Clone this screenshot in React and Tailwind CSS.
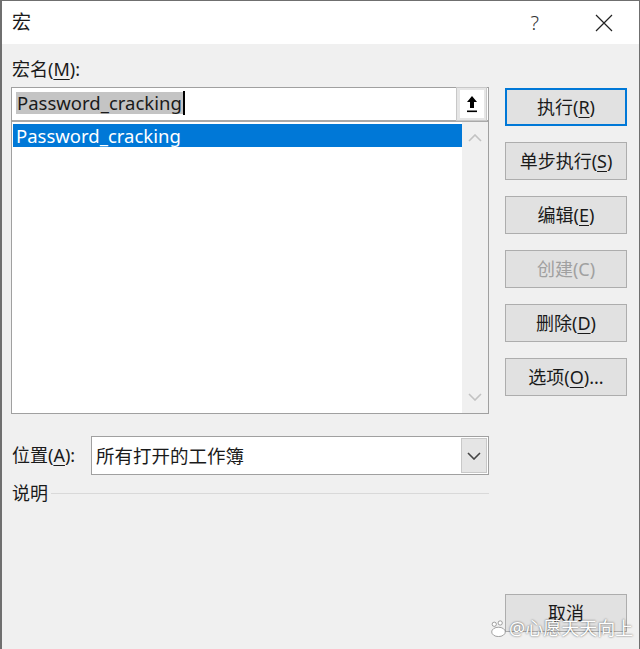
import React from 'react';

const FONT = { fontFamily: '"Noto Sans", "Noto Sans CJK SC", sans-serif' };

function U({ children }) {
  return <span className="underline underline-offset-[3px] decoration-1">{children}</span>;
}

function DlgButton({ children, primary, disabled }) {
  return (
    <button
      className={`h-[38px] w-[122px] flex items-center justify-center text-[18px] bg-[#e1e1e1] ${
        primary ? 'border-2 border-[#0078d7]' : 'border border-[#adadad]'
      } ${disabled ? 'text-[#a0a0a0]' : 'text-[#1a1a1a]'}`}
    >
      {children}
    </button>
  );
}

function Chevron({ up, color = '#c2c2c2' }) {
  return (
    <svg width="14" height="8" viewBox="0 0 14 8">
      <path
        d={up ? 'M1 7 L7 1 L13 7' : 'M1 1 L7 7 L13 1'}
        fill="none"
        stroke={color}
        strokeWidth="1.6"
      />
    </svg>
  );
}

export default function App() {
  return (
    <div style={FONT} className="relative w-[640px] h-[649px] overflow-hidden bg-[#f0f0f0] border-l-2 border-t border-r border-[#6f6f6f] text-[#1a1a1a]">
      {/* Title bar */}
      <div className="h-[43px] bg-white flex items-center">
        <span className="ml-[10px] text-[19px]">宏</span>
        <span className="ml-auto mr-[56px] text-[20px] text-[#333] font-light">?</span>
        <svg width="18" height="18" viewBox="0 0 18 18" className="mr-[26px]">
          <path d="M1 1 L17 17 M17 1 L1 17" stroke="#222" strokeWidth="1.2" />
        </svg>
      </div>

      <div className="flex pl-[9px]">
        {/* Left column */}
        <div className="w-[478px] flex flex-col">
          <div className="mt-[12px] h-[26px] text-[18px] leading-[26px] pl-[1px]">
            宏名(<U>M</U>):
          </div>
          <div className="mt-[5px] border border-[#a0a0a0] bg-white flex flex-col h-[327px]">
            {/* Name input */}
            <div className="h-[34px] flex items-center pl-[4px] pr-[1px] border-b-2 border-[#a9a9a9]">
              <span className="bg-[#c4c4c4] text-[18.5px] leading-[22px] px-[1px] -mt-[3px]">Password_cracking</span>
              <span className="w-[2px] h-[24px] bg-black -mt-[3px]" />
              <div className="ml-auto h-[34px] w-[31px] bg-[#e6e6e6] border border-[#c8c8c8] flex items-center justify-center">
                <div className="bg-white w-[24px] h-[28px] flex items-center justify-center">
                  <svg width="12" height="18" viewBox="0 0 12 18">
                    <path d="M6 1 L11 7 L8 7 L8 13 L4 13 L4 7 L1 7 Z" fill="#000" />
                    <rect x="1" y="15.5" width="10" height="1.6" fill="#000" />
                  </svg>
                </div>
              </div>
            </div>
            {/* List */}
            <div className="flex flex-1">
              <div className="flex-1 pt-[2px] pl-[1px]">
                <div className="h-[23px] bg-[#0078d7] text-white text-[18.5px] leading-[23px] pl-[3px]">
                  Password_cracking
                </div>
              </div>
              <div className="w-[26px] bg-[#f0f0f0] flex flex-col items-center justify-between py-[12px]">
                <Chevron up />
                <Chevron />
              </div>
            </div>
          </div>

          {/* Location */}
          <div className="mt-[22px] flex items-center">
            <span className="w-[80px] pl-[1px] text-[18px]">
              位置(<U>A</U>):
            </span>
            <div className="flex-1 h-[39px] border border-[#a0a0a0] bg-white flex items-center">
              <span className="pl-[4px] text-[18.5px]">所有打开的工作簿</span>
              <div className="ml-auto mr-[1px] w-[26px] h-[35px] bg-[#e5e5e5] border border-[#c8c8c8] flex items-center justify-center">
                <Chevron color="#444" />
              </div>
            </div>
          </div>

          {/* Description */}
          <div className="mt-[5px] flex items-center">
            <span className="pl-[1px] text-[18px]">说明</span>
            <div className="flex-1 ml-[3px] h-px bg-[#d9d9d9]" />
          </div>
        </div>

        {/* Right column */}
        <div className="ml-[16px] flex flex-col">
          <div className="mt-[44px] flex flex-col gap-[16px]">
            <DlgButton primary>执行(<U>R</U>)</DlgButton>
            <DlgButton>单步执行(<U>S</U>)</DlgButton>
            <DlgButton>编辑(<U>E</U>)</DlgButton>
            <DlgButton disabled>创建(C)</DlgButton>
            <DlgButton>删除(<U>D</U>)</DlgButton>
            <DlgButton>选项(<U>O</U>)...</DlgButton>
          </div>
          <div className="mt-[198px]">
            <DlgButton>取消</DlgButton>
          </div>
        </div>
      </div>

      {/* Watermark */}
      <div className="absolute left-[488px] top-[616px] flex items-center gap-[2px] text-white text-[18px] leading-[22px] [text-shadow:0_0_2px_rgba(0,0,0,0.7)]">
        <svg width="17" height="17" viewBox="0 0 20 20">
          <circle cx="5" cy="5" r="2.5" fill="#fff" stroke="#777" strokeWidth="0.8" />
          <circle cx="12" cy="3.5" r="2.5" fill="#fff" stroke="#777" strokeWidth="0.8" />
          <ellipse cx="10" cy="14" rx="8" ry="5.5" fill="#fff" stroke="#777" strokeWidth="0.8" />
        </svg>
        <span>@心愿天天向上</span>
      </div>
    </div>
  );
}
